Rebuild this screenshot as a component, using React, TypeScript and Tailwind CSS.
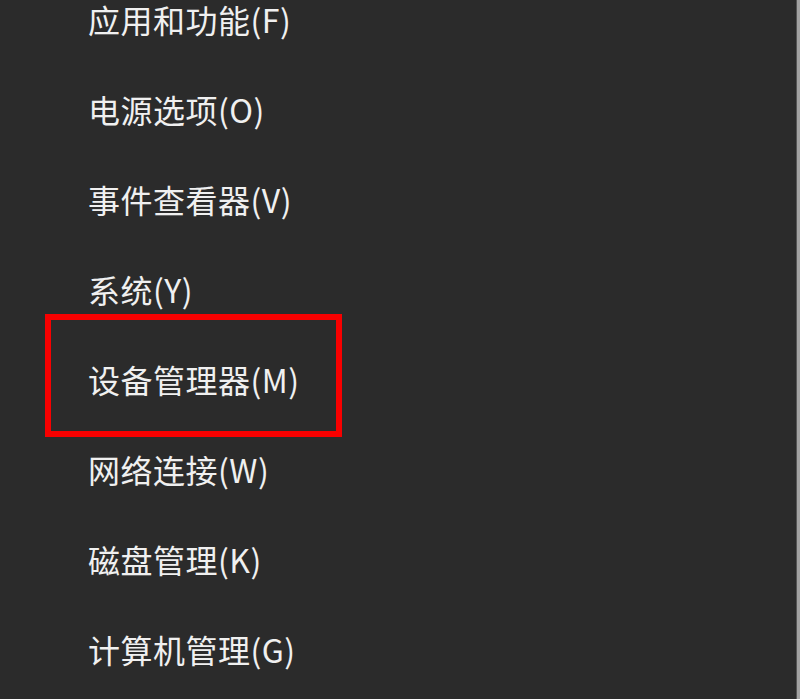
import React from 'react';

const items = [
  '应用和功能(F)',
  '电源选项(O)',
  '事件查看器(V)',
  '系统(Y)',
  '设备管理器(M)',
  '网络连接(W)',
  '磁盘管理(K)',
  '计算机管理(G)',
];

export default function App() {
  return (
    <div className="w-[800px] h-[699px] overflow-hidden bg-[#2b2b2b] flex">
      <div className="flex-1 flex flex-col gap-[58px] pt-[3px]">
        {items.map((label, i) => (
          <div key={i} className="relative h-[32px] shrink-0 flex items-center pl-[88px]">
            {i === 4 && (
              // highlight box around the selected entry
              <span className="absolute left-[45px] top-[-49px] w-[297px] h-[123px] border-[6px] border-[#f80000]" />
            )}
            <span className="text-[32px] leading-[32px] text-[#f0f0f0] tracking-[0.5px] [font-family:'Noto_Sans_CJK_SC',sans-serif]">
              {label}
            </span>
          </div>
        ))}
      </div>
      <div className="w-[1px] bg-[#555555]" />
      <div className="w-[3px] bg-[#a2a2a2]" />
    </div>
  );
}
